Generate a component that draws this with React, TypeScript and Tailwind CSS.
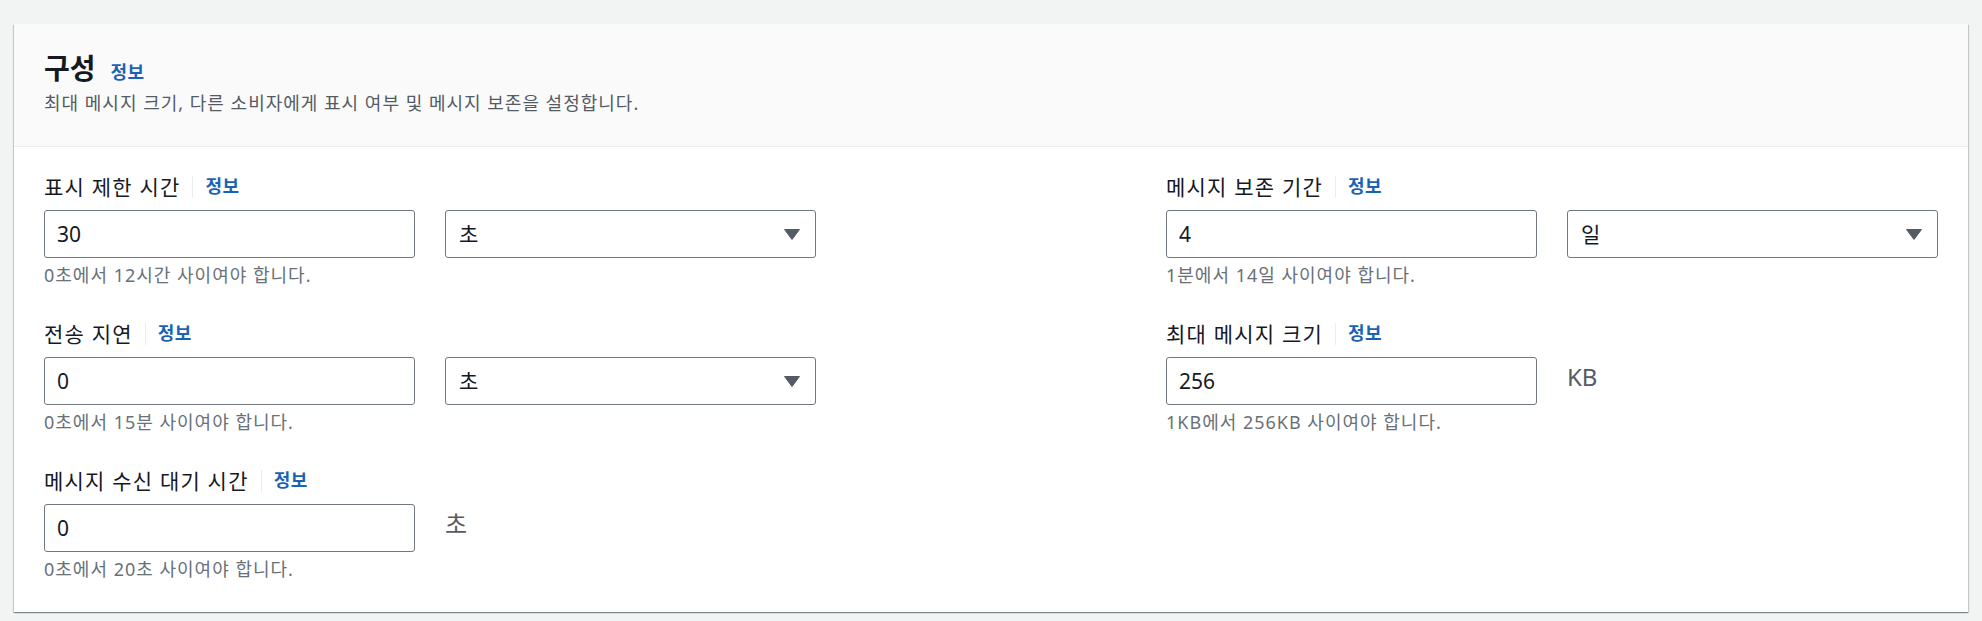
import type { ReactNode } from "react";

const FONT = "font-['Noto_Sans','Noto_Sans_CJK_KR',sans-serif]";

function InfoLink() {
  return (
    <span className="text-[18px] leading-[22px] font-bold tracking-[0.5px] text-[#1a62b5]">
      정보
    </span>
  );
}

function ArrowDown() {
  return (
    <svg width="16" height="11" viewBox="0 0 16 11" aria-hidden="true">
      <path d="M0.5 0.5 L15.5 0.5 L8 10.5 Z" fill="#545b64" stroke="#545b64" strokeLinejoin="round" />
    </svg>
  );
}

function TextInput({ value }: { value: string }) {
  return (
    <input
      readOnly
      value={value}
      className="h-[48px] w-[371px] rounded-[3px] border border-[#70777f] bg-white px-[12px] text-[21px] text-[#16191f] outline-none"
    />
  );
}

function SelectBox({ value }: { value: string }) {
  return (
    <div className="flex h-[48px] w-[371px] items-center justify-between rounded-[3px] border border-[#70777f] bg-white pr-[15px] pl-[13px]">
      <span className="text-[21px] leading-[24px] text-[#16191f]">{value}</span>
      <ArrowDown />
    </div>
  );
}

function Unit({ children }: { children: ReactNode }) {
  return (
    <div className="text-[24px] leading-[40px] text-[#545b64]">{children}</div>
  );
}

interface FieldProps {
  label: string;
  value: string;
  hint: string;
  side: ReactNode;
}

function Field({ label, value, hint, side }: FieldProps) {
  return (
    <div>
      <div className="flex h-[24px] items-center">
        <span className="text-[21px] leading-[24px] tracking-[1.2px] text-[#16191f]">{label}</span>
        <span className="ml-[12px] h-[22px] w-px bg-[#eaeded]" />
        <span className="ml-[12px]">
          <InfoLink />
        </span>
      </div>
      <div className="mt-[11px] flex items-start gap-[30px]">
        <TextInput value={value} />
        {side}
      </div>
      <div className="mt-[6px] text-[18px] leading-[22px] tracking-[1px] text-[#687078]">{hint}</div>
    </div>
  );
}

export default function App() {
  return (
    <div className={`min-h-screen bg-[#f2f3f3] px-[14px] pt-[24px] ${FONT}`}>
      <div className="bg-white shadow-[0_1px_1px_0_rgba(0,28,36,0.3),1px_1px_1px_0_rgba(0,28,36,0.15),-1px_1px_1px_0_rgba(0,28,36,0.15)]">
        <div className="border-b border-[#eaeded] bg-[#fafafa] px-[30px] pt-[29px] pb-[32px]">
          <div className="flex h-[30px] items-baseline">
            <h2 className="text-[28px] leading-[30px] font-bold text-[#16191f]">구성</h2>
            <span className="ml-[15px]">
              <InfoLink />
            </span>
          </div>
          <p className="mt-[9px] text-[18px] leading-[22px] tracking-[1px] text-[#545b64]">
            최대 메시지 크기, 다른 소비자에게 표시 여부 및 메시지 보존을 설정합니다.
          </p>
        </div>

        <div className="flex justify-between px-[30px] pt-[28px] pb-[32px]">
          <div className="flex w-[772px] flex-col gap-[36px]">
            <Field
              label="표시 제한 시간"
              value="30"
              hint="0초에서 12시간 사이여야 합니다."
              side={<SelectBox value="초" />}
            />
            <Field
              label="전송 지연"
              value="0"
              hint="0초에서 15분 사이여야 합니다."
              side={<SelectBox value="초" />}
            />
            <Field
              label="메시지 수신 대기 시간"
              value="0"
              hint="0초에서 20초 사이여야 합니다."
              side={<Unit>초</Unit>}
            />
          </div>

          <div className="flex w-[772px] flex-col gap-[36px]">
            <Field
              label="메시지 보존 기간"
              value="4"
              hint="1분에서 14일 사이여야 합니다."
              side={<SelectBox value="일" />}
            />
            <Field
              label="최대 메시지 크기"
              value="256"
              hint="1KB에서 256KB 사이여야 합니다."
              side={<Unit>KB</Unit>}
            />
          </div>
        </div>
      </div>
    </div>
  );
}
